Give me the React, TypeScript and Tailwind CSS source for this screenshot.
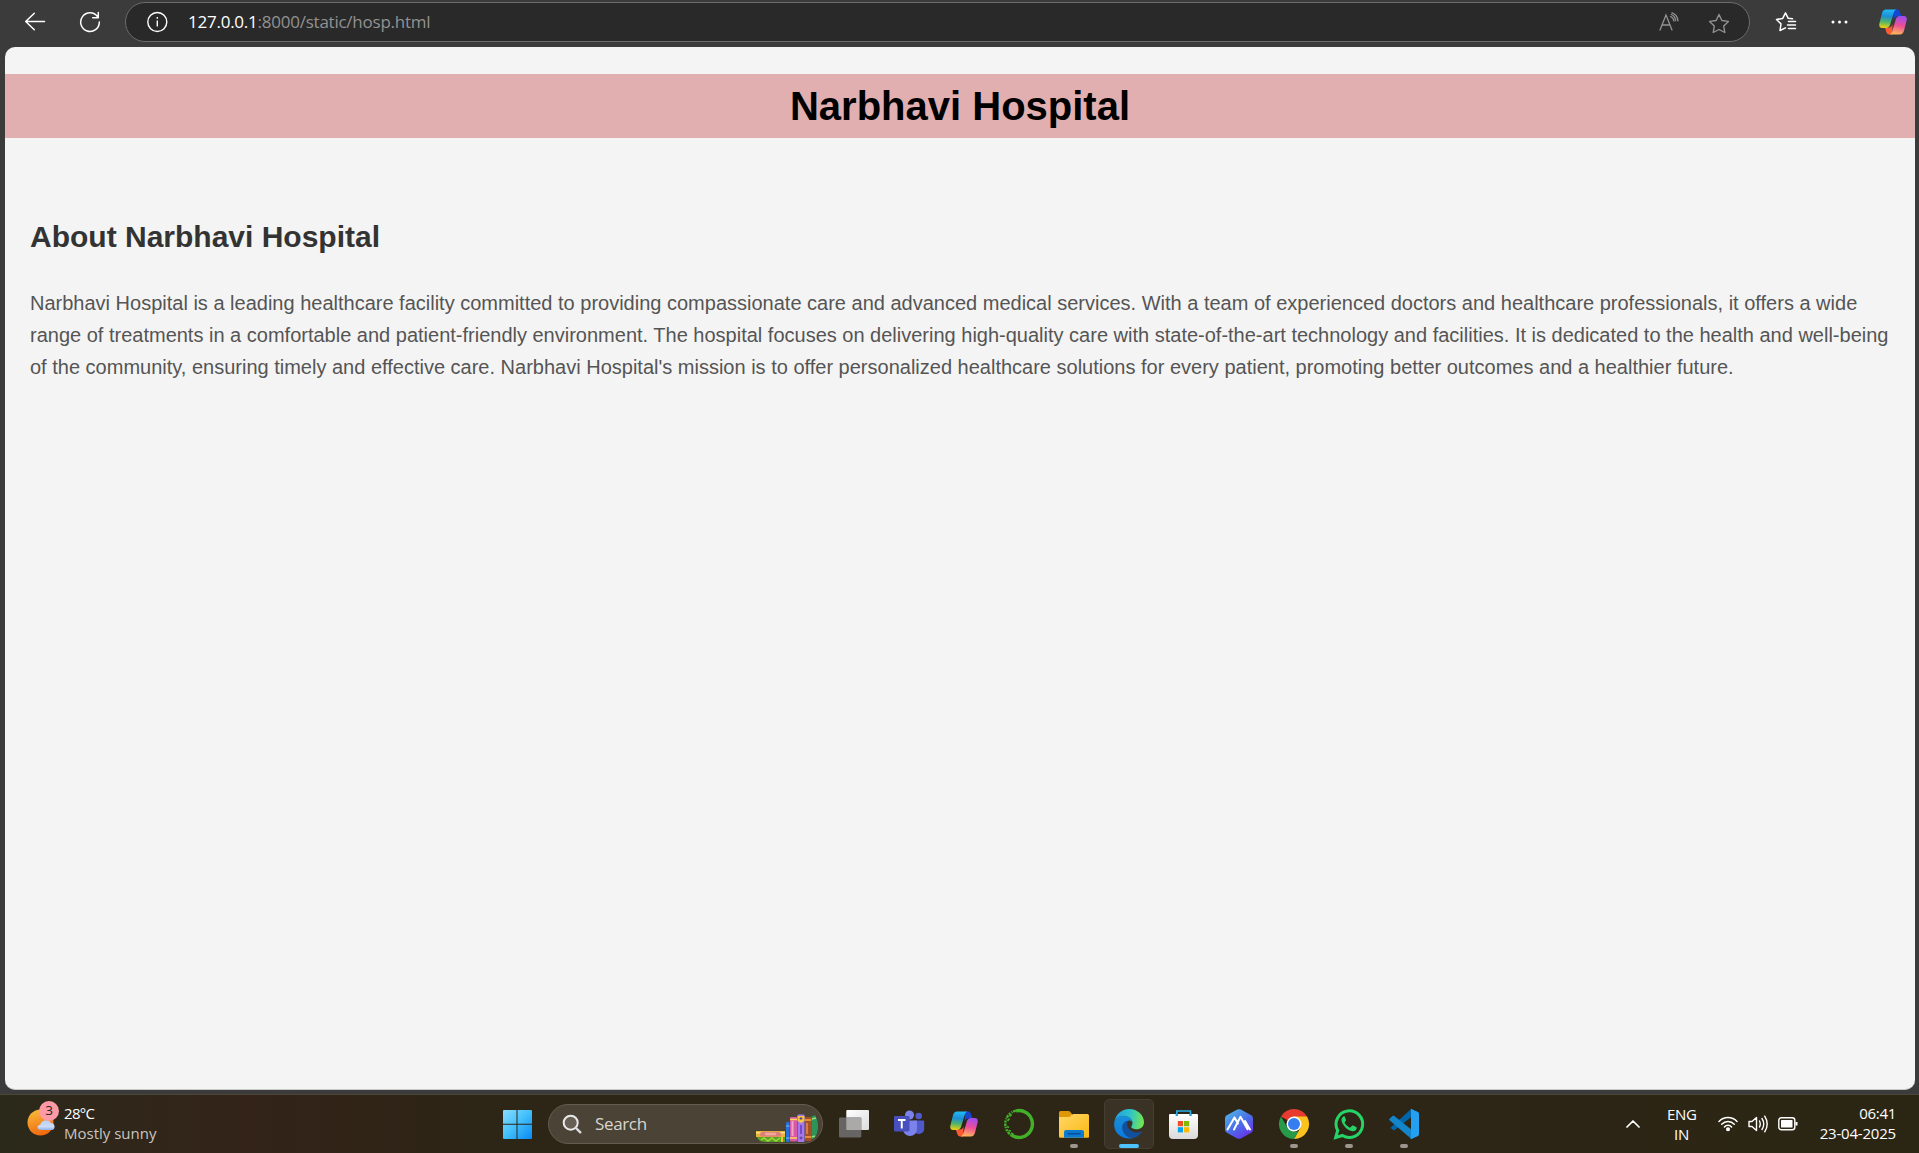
import React from "react";

function CopilotIcon({ id, className }: { id: string; className: string }) {
  return (
    <svg viewBox="0 0 28 26" className={className}>
      <defs>
        <linearGradient id={id + "a"} x1="0.3" y1="0" x2="0.2" y2="1">
          <stop offset="0" stopColor="#22b8f5" />
          <stop offset="0.35" stopColor="#1c8fd8" />
          <stop offset="0.65" stopColor="#4fb46a" />
          <stop offset="1" stopColor="#f6d20c" />
        </linearGradient>
        <linearGradient id={id + "b"} x1="0.6" y1="0" x2="0.4" y2="1">
          <stop offset="0" stopColor="#a04cf0" />
          <stop offset="0.5" stopColor="#ee4f97" />
          <stop offset="1" stopColor="#ffb65a" />
        </linearGradient>
      </defs>
      <path d="M15 0.5h3.2c1.600 0 2.300 1 2.800 2.600l1.500 4.400h-4c-2.500 0-3.200 1.500-3.800 3.500z" fill="#1447d4" />
      <path d="M13 25.500H10.200c-1.700 0-2.500-1.200-3-2.800L5.800 18.500h3.700c2.500 0 3.600-1.500 4.200-3.500z" fill="#fb5a34" />
      <path d="M7 0.500h10.500c-1.800.6-2.400 2-3 4L11.200 15.500c-.7 2.300-2 3.500-4.300 3.500H3.200C.8 19-.2 17.200.4 14.500L3 4.200C3.700 1.800 4.900.5 7 .5z" fill={"url(#" + id + "a)"} />
      <path d="M21 25.500H10.500c1.800-.6 2.400-2 3-4l3.300-11c.7-2.300 2-3.500 4.300-3.500h3.700c2.400 0 3.400 1.800 2.800 4.500L25 21.800c-.7 2.400-1.900 3.700-4 3.700z" fill={"url(#" + id + "b)"} />
    </svg>
  );
}

function BrowserBar() {
  return (
    <header className="flex h-[47px] shrink-0 items-start bg-[#3b3b3b]">
      <svg viewBox="0 0 22 20" className="ml-6 mt-3 h-5 w-[22px]" fill="none" stroke="#fff" strokeWidth="1.500" strokeLinecap="round" strokeLinejoin="round">
        <path d="M20.500 9.500H1.700M10.300 1.200 1.700 9.500l8.600 8.300" />
      </svg>
      <svg viewBox="0 0 22 22" className="ml-[33px] mt-[11px] h-[22px] w-[22px]" fill="none" stroke="#fff" strokeWidth="1.500" strokeLinecap="round" strokeLinejoin="round">
        <path d="M20.300 11A9.300 9.300 0 1 1 18.600 5.800M19.300 1.500v5.300H13.700" />
      </svg>
      <div className="ml-6 mt-[2px] flex h-10 w-[1625px] items-center rounded-full border border-[#6c6c6c] bg-[#292929]">
        <svg viewBox="0 0 22 22" className="ml-[20px] h-[22px] w-[22px]" fill="none" stroke="#fff" strokeWidth="1.400">
          <circle cx="11.300" cy="11" r="9.500" />
          <path d="M11.300 9.500v6M11.300 6v1.700" />
        </svg>
        <p className="ml-[20px] w-[242px] whitespace-nowrap font-['Open_Sans',sans-serif] text-[17px] leading-[22px] tracking-[-0.240px] text-[#929292]">
          <span className="text-white">127.0.0.1</span>:8000/static/hosp.html
        </p>
        <svg viewBox="0 0 20 20" className="ml-auto h-5 w-5" fill="none" stroke="#929292" strokeWidth="1.300" strokeLinecap="round">
          <path d="M1 18 7 3l6 15M3 13h8M11.500 4.500c2 .7 3.200 2.300 3.400 4.500M12.300 2.500c2.300.8 3.900 2.700 4.400 6M13 .8c3.300 1 5.500 4 6 8" />
        </svg>
        <svg viewBox="0 0 22 22" className="ml-[29px] mr-[19px] mt-1 h-[22px] w-[22px]" fill="none" stroke="#929292" strokeWidth="1.400" strokeLinejoin="round">
          <path d="m11 1.500 2.900 6 6.500.9-4.700 4.600 1.100 6.500-5.800-3-5.800 3 1.100-6.500L1.600 8.400l6.500-.9z" />
        </svg>
      </div>
      <svg viewBox="0 0 22 22" className="ml-[25px] mt-[11px] h-[22px] w-[22px]" fill="none" stroke="#fff" strokeWidth="1.500" strokeLinejoin="round" strokeLinecap="round">
        <path d="M17.500 7.800 13.200 7.300 10.500 1.800 7.700 7.400 1.500 8.500l4.500 4.400-1 6.600 5.500-2.700M13.500 10.500H20.500M12.500 14h8M13.500 17.500h7" />
      </svg>
      <svg viewBox="0 0 18 4" className="ml-[34px] mt-5 h-1 w-[18px]" fill="#fff">
        <circle cx="2" cy="2" r="1.500" /><circle cx="8.500" cy="2" r="1.500" /><circle cx="15" cy="2" r="1.500" />
      </svg>
      <CopilotIcon id="top" className="ml-[30px] mt-[9px] h-[26px] w-7" />
    </header>
  );
}

function WebPage() {
  return (
    <main className="mx-[5px] mr-[4px] h-[1043px] shrink-0 overflow-hidden rounded-[10px] border-b border-[#c8cac8] bg-[#f4f4f4] font-['Liberation_Sans',Arial,sans-serif]">
      <h1 className="mt-[27px] h-16 bg-[#e1afb0] text-center text-[40px] font-bold leading-[64px] text-black">Narbhavi Hospital</h1>
      <section className="px-[25px] pt-[77px]">
        <h2 className="text-[30px] font-bold leading-[44px] text-[#333]">About Narbhavi Hospital</h2>
        <p className="mt-7 whitespace-nowrap text-[20px] leading-8 text-[#555]">
          Narbhavi Hospital is a leading healthcare facility committed to providing compassionate care and advanced medical services. With a team of experienced doctors and healthcare professionals, it offers a wide
          <br />
          range of treatments in a comfortable and patient-friendly environment. The hospital focuses on delivering high-quality care with state-of-the-art technology and facilities. It is dedicated to the health and well-being
          <br />
          of the community, ensuring timely and effective care. Narbhavi Hospital's mission is to offer personalized healthcare solutions for every patient, promoting better outcomes and a healthier future.
        </p>
      </section>
    </main>
  );
}

function Weather() {
  return (
    <div className="flex w-[472px] font-['Open_Sans',sans-serif]">
      <div className="relative ml-[26px] mt-[7px] h-9 w-[34px]">
        <svg viewBox="0 0 34 36" className="h-9 w-[34px]">
          <defs>
            <linearGradient id="sun" x1="0.3" y1="0" x2="0.6" y2="1">
              <stop offset="0" stopColor="#f6b93a" /><stop offset="1" stopColor="#f2660d" />
            </linearGradient>
            <linearGradient id="cloud" x1="0" y1="0" x2="0" y2="1">
              <stop offset="0" stopColor="#b5cff5" /><stop offset="0.65" stopColor="#cddcf7" /><stop offset="1" stopColor="#8fb0e8" />
            </linearGradient>
          </defs>
          <circle cx="14.500" cy="21.500" r="13" fill="url(#sun)" />
          <path d="M15 29c-4.500 0-4.500-5-.6-5.200C15 18.500 23 17.500 24.800 22c4.500-.5 5.200 7 1 7z" fill="url(#cloud)" />
        </svg>
        <span className="absolute left-[13px] top-0 flex h-5 w-5 items-center justify-center rounded-full bg-[#ff99a5] text-[13.500px] leading-none text-[#222]">3</span>
      </div>
      <div className="ml-1 mt-[9px] whitespace-nowrap text-[15px] leading-5 text-white">
        <p className="tracking-[-0.700px]">28°C</p>
        <p className="text-[#c8c5c0]">Mostly sunny</p>
      </div>
    </div>
  );
}

function SearchBox() {
  return (
    <div className="ml-[6px] mr-[6px] mt-[10px] flex h-10 w-[275px] items-center overflow-hidden rounded-full border border-[#645d50] bg-[#4b4335]">
      <svg viewBox="0 0 20 20" className="ml-[13px] h-5 w-5" fill="none" strokeLinecap="round">
        <circle cx="8.700" cy="8.700" r="7" stroke="#e9e9e9" strokeWidth="2" fill="#665f53" />
        <path d="m13.800 13.800 4.500 4.500" stroke="#d9d9e2" strokeWidth="2.400" />
      </svg>
      <span className="ml-[13px] font-['Open_Sans',sans-serif] text-[17px] tracking-[-0.350px] text-[#d9d6cf]">Search</span>
      <svg viewBox="0 0 62 29" className="ml-auto mr-1 mt-2 h-[29px] w-[62px]">
        <path d="M0 17h29v6H0z" fill="#e8b33a" />
        <path d="M0 18h29v1.500H0z" fill="#ffe07a" />
        <rect x="4" y="17.800" width="21" height="5" rx="2.500" fill="#df8078" />
        <rect x="9" y="18.800" width="11" height="2.500" rx="1" fill="#efa99c" />
        <path d="M1 23h28v5H9c-4 0-7-2-8-5z" fill="#59a323" />
        <path d="m5 26 3-2 4 3 4-3 4 3 4-3" fill="none" stroke="#a2d739" strokeWidth="1.500" />
        <path d="M25 23h2v5h-2z" fill="#f5c13b" />
        <rect x="30" y="8" width="3.500" height="20" rx="1" fill="#2472dd" />
        <path d="M30 12h3.500M30 24h3.500" stroke="#8bbdf7" />
        <rect x="34" y="3" width="7" height="24.500" rx="1" fill="#d65aa5" />
        <path d="M36.500 7v15" stroke="#f3a2cc" strokeWidth="2" />
        <path d="M34 5.500h7M34 24h7" stroke="#ffd95c" strokeWidth="1.500" />
        <rect x="41.500" y=".5" width="7" height="27.500" rx="1" fill="#a678ed" />
        <path d="M41.500 2h7v5l-3.500 2-3.500-2z" fill="#f6c440" />
        <path d="M45 3v3M43.500 4.500h3M45 22.500v3M43.500 24h3" stroke="#543b91" />
        <path d="M45 11v9" stroke="#7549c7" strokeWidth="2" />
        <rect x="49" y="3" width="6.500" height="24" rx="1" fill="#a54f25" />
        <path d="M49 6h6.500M49 23h6.500" stroke="#f4a442" strokeWidth="1.500" />
        <path d="M51 9v11" stroke="#d77b4d" strokeWidth="2" />
        <path d="M55.500 2.500 59 1l2.500 6c1.200 7 .3 13-3 17l-3 1.500z" fill="#2c9458" />
        <path d="m56 5 4-1M56 23l3-1" stroke="#9ddc7a" strokeWidth="1.500" />
      </svg>
    </div>
  );
}

const icons: Record<string, React.ReactNode> = {
  start: (
    <>
      <defs><linearGradient id="win" gradientUnits="userSpaceOnUse" x1="1" y1="1" x2="29" y2="29"><stop offset="0" stopColor="#8adcff" /><stop offset="0.5" stopColor="#43c0fa" /><stop offset="1" stopColor="#0c8df5" /></linearGradient></defs>
      <path d="M1 2q0-1 1-1h12.500v13.700H1zM15.500 1H29q1 0 1 1v12.700H15.500zM1 15.800h13.500V30H2q-1 0-1-1zM15.500 15.800H30V29q0 1-1 1H15.500z" fill="url(#win)" />
    </>
  ),
  view: (
    <>
      <defs><linearGradient id="tv" x1="0" y1="0" x2="1" y2="1"><stop stopColor="#fff" /><stop offset="1" stopColor="#dcdcdc" /></linearGradient></defs>
      <rect x="7.300" y="1" width="22.700" height="20" rx="1" fill="url(#tv)" />
      <rect x="0" y="8.500" width="22.300" height="20" rx="1" fill="#666563" />
      <path d="M7.300 8.500h14q1 0 1 1V21h-15z" fill="#aaa9a8" />
    </>
  ),
  teams: (
    <>
      <circle cx="24.700" cy="7" r="3.300" fill="#5059c9" />
      <path d="M20 11.500h9q1.200 0 1.200 1.200v7a5.500 5.500 0 0 1-10 3z" fill="#5059c9" />
      <circle cx="15.500" cy="6" r="4.500" fill="#7b83eb" />
      <path d="M9 11.500h13q1 0 1 1V20a7 7 0 0 1-14 0z" fill="#7b83eb" />
      <rect x="0" y="7" width="15.500" height="15.500" rx="1.300" fill="#4850bd" />
      <path d="M4 11h7.500M7.750 11v8.500" stroke="#fff" strokeWidth="1.900" fill="none" />
    </>
  ),
  anaconda: (
    <>
      <circle cx="15" cy="15" r="13.400" fill="none" stroke="#43b02a" strokeWidth="3.400" strokeDasharray="53 100" strokeDashoffset="0" transform="rotate(-103 15 15)" />
      <circle cx="15" cy="15" r="13.700" fill="none" stroke="#43b02a" strokeWidth="2.400" strokeDasharray="2.200 1.200 1.100 .8 3 1" pathLength="90" />
      <path d="M4.500 28.500" />
      <path d="M5.500 7.500l2.200-2M3.500 12l2-2.500M3 17.500l2 1M4.500 21.500l2.500.5M7 24l2.500 1.500" stroke="#43b02a" strokeWidth="1.600" />
    </>
  ),
  folder: (
    <>
      <defs><linearGradient id="fold" x1="0" y1="0" x2="1" y2="1"><stop stopColor="#ffd766" /><stop offset="1" stopColor="#fbb813" /></linearGradient></defs>
      <path d="M0 3.500Q0 2 1.500 2h8q1 0 2 1.200L13 5v4H0z" fill="#de9705" />
      <path d="M0 8h9.500q1.500 0 2.500-1.500T14.500 5H28.500Q30 5 30 6.500V28q0 .7-1 .7H1.500Q0 28.700 0 27.500z" fill="url(#fold)" />
      <path d="M5 28.700V23q0-2 2-2h16q2 0 2 2v5.700z" fill="#0a7bd0" />
      <path d="M8.500 24.700h13" stroke="#064f9c" strokeWidth="1.600" />
    </>
  ),
  edge: (
    <>
      <defs>
        <linearGradient id="e1" x1="0" y1=".4" x2="1" y2=".5"><stop stopColor="#259fdc" /><stop offset=".5" stopColor="#2cc3cd" /><stop offset="1" stopColor="#74e64c" /></linearGradient>
        <linearGradient id="e2" x1="0.5" y1="0" x2=".5" y2="1"><stop stopColor="#198fd8" /><stop offset="1" stopColor="#0b79dc" /></linearGradient>
      </defs>
      <path d="M.4 13C1.500 5.500 7.500 0 15 0c9 0 15 6.500 15 13.200 0 4.500-3.500 7-7.500 7-3 0-5.300-1.200-5.300-2.200 0-.8 1.300-1.500 1.300-4C18.500 10 14 7 9.500 7 5 7 1.500 9.500.4 13z" fill="url(#e1)" />
      <path d="M.2 13.500C1.500 8.500 6 6.500 9.800 6.700c5 .2 8.700 3.500 8.700 6.800-1-1.500-2.500-2.200-4-1.800-3.500.8-5 4.300-4 8.300 1 4.500 4.500 8.500 9 9C9.500 31.500-1 25 .2 13.500z" fill="url(#e2)" />
      <path d="M14 11.800c-4 .5-6.500 4-5.700 8.200.8 5 5 9 10 9.300 3.800-.5 7.200-2.700 9.300-6 .4-.7 0-1.200-.8-.8-4 2-9.800.8-12.300-3.200-1.700-2.800-1.700-5.500-.5-7.500z" fill="#11509f" />
    </>
  ),
  store: (
    <>
      <defs><linearGradient id="bag" x1="0" y1="0" x2="0" y2="1"><stop stopColor="#fff" /><stop offset="1" stopColor="#dadada" /></linearGradient></defs>
      <path d="M7.800 7V2h13.700v5" fill="none" stroke="#27aee9" strokeWidth="1.600" />
      <path d="M0 6q0-1 1-1h5.800v2h2V5h11.700v2h2V5H28q1 0 1 1v20q0 4-4 4H4q-4 0-4-4z" fill="url(#bag)" />
      <path d="M8.800 12H14v5.200H8.800z" fill="#f25022" /><path d="M15 12h5.200v5.200H15z" fill="#7fba00" />
      <path d="M8.800 18.200H14v5.200H8.800z" fill="#00a4ef" /><path d="M15 18.200h5.200v5.200H15z" fill="#ffb900" />
    </>
  ),
  hexagon: (
    <>
      <defs><linearGradient id="hex" x1=".1" y1="0" x2=".8" y2="1"><stop stopColor="#50b9e9" /><stop offset=".5" stopColor="#4a72e8" /><stop offset="1" stopColor="#6a2de8" /></linearGradient></defs>
      <path d="M13.200.6q1.800-.9 3.600 0l10.400 5.600q1.800 1 1.800 3v11.600q0 2-1.800 3L16.800 29.400q-1.800.9-3.600 0L2.800 23.800q-1.800-1-1.800-3V9.200q0-2 1.800-3z" fill="url(#hex)" />
      <path d="M3.500 20.500 10.500 8.500l3 5M10 20.500l6.500-12.700 7 12.500M21 12l5 8.500M10.500 8.500l3.500 6" stroke="#fff" strokeWidth="2" fill="none" strokeLinecap="round" strokeLinejoin="round" />
    </>
  ),
  chrome: (
    <>
      <path d="M15 15 2 7.500A15 15 0 0 1 28 7.500z" fill="#e63b2e" />
      <path d="M15 7.500h13A15 15 0 0 1 15 30l6.500-11.250z" fill="#fcc31e" />
      <path d="M2 7.500 8.500 18.750 15 22.500h4.300L15 30A15 15 0 0 1 2 7.500z" fill="#269a48" />
      <circle cx="15" cy="15" r="7.500" fill="#fff" /><circle cx="15" cy="15" r="6" fill="#347ef0" />
    </>
  ),
  whatsapp: (
    <>
      <path d="M1.700 28.500 3.700 21.500A13.300 13.300 0 1 1 8.500 26.500z" fill="none" stroke="#25d366" strokeWidth="3" />
      <path d="M10.800 7.800c-.5-.7-1.400-.5-2 .1-1.300 1.300-1.600 3-.9 5 1.800 4.800 6 8.500 10.600 9.300 2 .2 4-1 4.200-3 .1-.7-.1-.9-.6-1.200l-3-1.500c-.6-.2-.9-.1-1.200.3l-1.200 1.400c-.3.4-.7.4-1.200.2-2-.9-3.600-2.300-4.700-4.300-.3-.5-.2-.8.100-1.100l.9-1.200c.3-.4.300-.7.100-1.100z" fill="#25d366" />
    </>
  ),
  code: (
    <>
      <path d="m1.200 18.500 3 2.500q.8.600 1.500 0L23 7.500V.5q-1-.3-2 .6L1.200 19q-1 .8 0 1.800z" fill="#0065a9" />
      <path d="m.5 9.700 3-2.700q.9-.8 1.800-.1L23 21v8.500q-1 .2-2-.7L.5 11.300q-.8-.8 0-1.600z" fill="#1285cb" />
      <path d="M22.500 0 29 3q1 .6 1 1.700v20.600q0 1.100-1 1.700l-6.500 3q-1 .2-1.900-.7 1.400.7 1.400-.8v-27q0-1.400-1.400-.7.900-.9 1.900-.8z" fill="#24a0f0" />
    </>
  ),
};

function TaskItem({ name, running = false, active = false }: { name: string; running?: boolean; active?: boolean }) {
  return (
    <div className={active ? "mr-[5px] mt-[5px] flex h-[50px] w-[50px] flex-col items-center rounded-[5px] border border-[#453d30] bg-[#3a3225]" : "mr-[5px] mt-[5px] flex h-[50px] w-[50px] flex-col items-center border border-transparent"}>
      {name === "copilot" ? (
        <div className="mt-[9px] flex h-[30px] w-[30px] items-center justify-center"><CopilotIcon id="task" className="h-[26px] w-7" /></div>
      ) : (
        <svg viewBox="0 0 30 30" className="mt-[9px] h-[30px] w-[30px] shrink-0 overflow-visible">{icons[name]}</svg>
      )}
      {active && <span className="mt-[5px] h-1 w-5 shrink-0 rounded-full bg-[#4cc2ff]" />}
      {running && <span className="mt-[5px] h-1 w-2 shrink-0 rounded-full bg-[#9c968d]" />}
    </div>
  );
}

function Tray() {
  return (
    <div className="ml-auto flex font-['Open_Sans',sans-serif] text-[15px] leading-5 text-white">
      <svg viewBox="0 0 14 8" className="mr-[27px] mt-[26px] h-2 w-[14px]" fill="none" stroke="#fff" strokeWidth="1.700" strokeLinecap="round" strokeLinejoin="round"><path d="m1 7 6-6 6 6" /></svg>
      <div className="mt-[10px] w-[29px] text-center tracking-[-0.350px]"><p>ENG</p><p>IN</p></div>
      <svg viewBox="0 0 20 16" className="ml-[22px] mt-[22px] h-4 w-5" fill="none" stroke="#fff" strokeWidth="1.500" strokeLinecap="round">
        <path d="M1 5.500c5-5.300 13-5.300 18 0M3.700 8.300c3.600-3.800 9-3.800 12.600 0M6.400 11c2-2.300 5.200-2.300 7.200 0" /><circle cx="10" cy="13.200" r="1.300" fill="#fff" />
      </svg>
      <svg viewBox="0 0 20 18" className="ml-[10px] mt-[21px] h-[18px] w-5" fill="none" stroke="#fff" strokeWidth="1.400" strokeLinecap="round" strokeLinejoin="round">
        <path d="M1 6.500h3L8.500 2.500v13L4 11.500H1zM11.500 6q1.500 3 0 6M14 3.500q3.500 5.500 0 11M16.700 1.200q5 7.800 0 15.600" />
      </svg>
      <svg viewBox="0 0 20 14" className="ml-[10px] mt-[23px] h-[14px] w-5" fill="none" stroke="#fff" strokeWidth="1.400">
        <rect x=".8" y=".8" width="16" height="12" rx="2.500" /><rect x="3" y="3" width="11.500" height="7.600" rx=".6" fill="#fff" stroke="none" /><path d="M18.500 5v3.500" strokeWidth="2" />
      </svg>
      <div className="mr-[23px] mt-[9px] w-[98px] whitespace-nowrap text-right"><p className="tracking-[-0.300px]">06:41</p><p className="tracking-[-0.200px]">23-04-2025</p></div>
    </div>
  );
}

export default function App() {
  return (
    <div className="flex h-[1153px] w-[1919px] flex-col overflow-hidden bg-[#3b3b3b]">
      <BrowserBar />
      <WebPage />
      <footer className="mt-1 flex h-[59px] shrink-0 border-t border-[#4b4737] bg-[linear-gradient(90deg,#2b2a1a_0%,#30261a_6%,#332318_13%,#2d2516_25%,#2d2516_75%,#2b2614_100%)]">
        <div className="-mt-px flex w-full">
          <Weather />
          <div className="ml-5 flex">
            <TaskItem name="start" />
            <div className="-ml-[5px] flex"><SearchBox /></div>
            <TaskItem name="view" />
            <TaskItem name="teams" />
            <TaskItem name="copilot" />
            <TaskItem name="anaconda" />
            <TaskItem name="folder" running />
            <TaskItem name="edge" active />
            <TaskItem name="store" />
            <TaskItem name="hexagon" />
            <TaskItem name="chrome" running />
            <TaskItem name="whatsapp" running />
            <TaskItem name="code" running />
          </div>
          <Tray />
        </div>
      </footer>
    </div>
  );
}
